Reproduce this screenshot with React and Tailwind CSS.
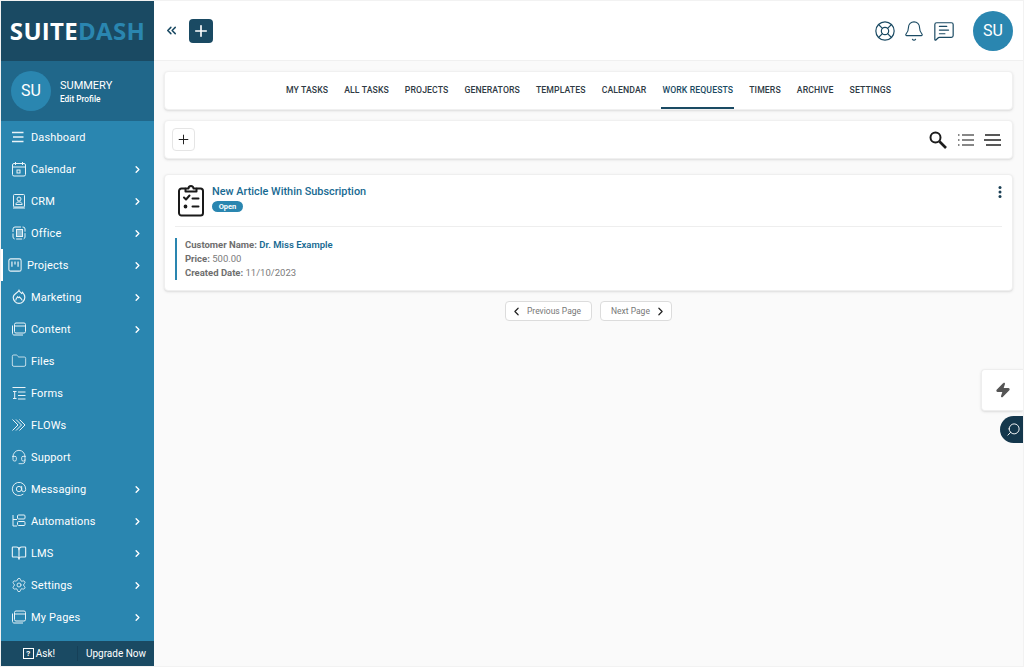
//-----------Libraries-----------//
import React from "react";

//-----------Media-----------//
import {
  AtSign,
  BookOpen,
  ChevronLeft,
  ChevronRight,
  ChevronsLeft,
  Folder,
  Headset,
  LifeBuoy,
  Bell,
  MessageSquareText,
  Plus,
  Settings,
  Zap,
  Search,
} from "lucide-react";

const Svg = ({ children, className = "h-4 w-4" }) => (
  <svg
    viewBox="0 0 16 16"
    fill="none"
    stroke="currentColor"
    strokeWidth="1"
    className={className}
  >
    {children}
  </svg>
);

const LinesIcon = () => (
  <Svg>
    <path d="M1 3.500h11.500M2 8H12.500M1 12.500h11.500" strokeWidth="1.300" />
  </Svg>
);
const CalendarIcon = () => (
  <Svg>
    <rect x="1.500" y="2.500" width="13" height="12.500" rx="1.500" />
    <path d="M1.500 6h13M4.500 1v3M11.500 1v3" />
    <rect x="6" y="9" width="3" height="3" />
  </Svg>
);
const CrmIcon = () => (
  <Svg>
    <rect x="2.500" y="1.500" width="11" height="12.500" rx="1" />
    <circle cx="8" cy="6" r="2" />
    <path d="M4.800 11.500c.3-2 1.500-2.600 3.200-2.600s2.900.6 3.200 2.600zM2 15h12" />
  </Svg>
);
const OfficeIcon = () => (
  <Svg>
    <rect x="2" y="2" width="12" height="12" rx="2" strokeDasharray="6 1.500" />
    <rect x="5.500" y="4.500" width="6" height="7" fill="currentColor" fillOpacity="0.450" />
  </Svg>
);
const ProjectsIcon = () => (
  <Svg className="h-[14px] w-[14px]">
    <rect x="1" y="1" width="14" height="14" rx="2" strokeWidth="1.200" />
    <path d="M4.500 4v6M8 4v3.500M11.500 4v6" strokeWidth="1.400" />
  </Svg>
);
const MarketingIcon = () => (
  <Svg>
    <path d="M8 1.500c.6 1.600 1.800 1.800 2.600 3 .6-.4.800-.8.900-1.200 1.300 1.300 2.300 3 2.300 5 0 3.500-2.700 6-5.800 6s-5.800-2.500-5.800-6c0-2.500 2.300-3.500 3.200-4.300C6 2.900 7.500 2.800 8 1.500z" strokeWidth="1.200" />
    <path d="M4.800 11.500c0-2.200 1.300-2.700 1.800-3.700.7.900 1 1.200 1.600.1.900 1 2.900 2 2.900 3.600" strokeWidth="1.100" />
  </Svg>
);
const WindowsIcon = () => (
  <Svg>
    <rect x="3.500" y="2" width="11" height="10" rx="1.500" />
    <path d="M3.500 5h11M1.500 4.500v8c0 .8.700 1.500 1.500 1.500h9" />
  </Svg>
);
const FormsIcon = () => (
  <Svg>
    <path d="M1.500 2.500h13M7 7h7.500M7 10.500h7.500M7 14h7.500M2 6.500h3.500M2 13.500h3.500M3.700 6.500v7" />
  </Svg>
);
const FlowsIcon = () => (
  <Svg>
    <path d="M1.500 2.500 7 8l-5.500 5.500M5 2.500 10.500 8 5 13.500M8.500 2.500 14 8l-5.500 5.500" />
  </Svg>
);
const AutomationIcon = () => (
  <Svg>
    <path d="M2 2v11h4M2 6.500h4" />
    <rect x="6.500" y="2" width="7.500" height="4" rx="1" />
    <rect x="6.500" y="8.500" width="7.500" height="4" rx="1" />
  </Svg>
);
const ClipboardIcon = () => (
  <svg
    viewBox="0 0 26 34"
    fill="none"
    stroke="#1a1a1a"
    strokeWidth="2"
    strokeLinecap="round"
    strokeLinejoin="round"
    className="h-[34px] w-[26px]"
  >
    <path d="M7 5.500H3.500A2.500 2.500 0 0 0 1 8v22a2.500 2.500 0 0 0 2.500 2.500h19A2.500 2.500 0 0 0 25 30V8a2.500 2.500 0 0 0-2.500-2.500H19" />
    <path d="M7.500 8.500V5.500h3a2.500 2.500 0 0 1 5 0h3v3z" />
    <path d="M6 14.500l2 2 3.500-4M14.500 15.500h6M14.500 23.500h6" />
    <circle cx="7.500" cy="23.500" r="0.900" fill="#1a1a1a" />
  </svg>
);

const menuItems = [
  { label: "Dashboard", icon: <LinesIcon /> },
  { label: "Calendar", icon: <CalendarIcon />, arrow: true },
  { label: "CRM", icon: <CrmIcon />, arrow: true },
  { label: "Office", icon: <OfficeIcon />, arrow: true },
  { label: "Projects", icon: <ProjectsIcon />, arrow: true, active: true },
  { label: "Marketing", icon: <MarketingIcon />, arrow: true },
  { label: "Content", icon: <WindowsIcon />, arrow: true },
  { label: "Files", icon: <Folder className="h-4 w-4" strokeWidth={1.200} /> },
  { label: "Forms", icon: <FormsIcon /> },
  { label: "FLOWs", icon: <FlowsIcon /> },
  { label: "Support", icon: <Headset className="h-4 w-4" strokeWidth={1.300} /> },
  { label: "Messaging", icon: <AtSign className="h-4 w-4" strokeWidth={1.400} />, arrow: true },
  { label: "Automations", icon: <AutomationIcon />, arrow: true },
  { label: "LMS", icon: <BookOpen className="h-4 w-4" strokeWidth={1.700} />, arrow: true },
  { label: "Settings", icon: <Settings className="h-4 w-4" strokeWidth={1.300} />, arrow: true },
  { label: "My Pages", icon: <WindowsIcon />, arrow: true },
];

const tabs = [
  "MY TASKS",
  "ALL TASKS",
  "PROJECTS",
  "GENERATORS",
  "TEMPLATES",
  "CALENDAR",
  "WORK REQUESTS",
  "TIMERS",
  "ARCHIVE",
  "SETTINGS",
];

const Sidebar = () => (
  <aside className="flex w-[153px] shrink-0 flex-col bg-[#2a86b0] text-white">
    {/* logo */}
    <div className="flex h-[60px] items-center justify-center bg-[#1a4a63]">
      <span className="text-[24px] leading-none font-bold tracking-[0.3px] [font-family:'Open_Sans',sans-serif]">
        SUITE<span className="text-[#2a86b0]">DASH</span>
      </span>
    </div>
    {/* profile */}
    <div className="flex h-[60px] items-center gap-[9px] bg-[#20678a] pl-[10px]">
      <div className="flex h-10 w-10 items-center justify-center rounded-full bg-[#2a86b0] text-base">
        SU
      </div>
      <div>
        <div className="text-[11px] leading-[15px]">SUMMERY</div>
        <div className="text-[8.300px] leading-3 font-medium">Edit Profile</div>
      </div>
    </div>
    {/* menu */}
    <nav className="flex-1">
      {menuItems.map((item) => (
        <div
          key={item.label}
          className={`flex h-8 items-center text-[11px] tracking-[0.150px] ${
            item.active ? "border-l-2 border-white pl-[4px]" : "pl-[10px]"
          }`}
        >
          <span className="mr-[4px] flex h-4 w-4 items-center justify-center opacity-90">
            {item.icon}
          </span>
          <span className="pt-[2px]">{item.label}</span>
          {item.arrow && (
            <ChevronRight className="mr-[11px] ml-auto h-[11px] w-[11px]" strokeWidth={3} />
          )}
        </div>
      ))}
    </nav>
    {/* footer */}
    <div className="flex h-[25px] items-center bg-[#1a4a63] text-[10px]">
      <div className="flex w-[77px] items-center justify-center gap-[2px] border-r border-[#164058]">
        <span className="flex h-[11px] w-[11px] items-center justify-center border border-white text-[8px] leading-none font-bold">
          ?
        </span>
        Ask!
      </div>
      <div className="flex-1 text-center">Upgrade Now</div>
    </div>
  </aside>
);

const TopBar = () => (
  <header className="flex h-[60px] shrink-0 items-center border-b border-[#f0f0f0] bg-white pr-[10px] pl-[10px]">
    <ChevronsLeft className="h-[15px] w-[15px] text-[#1a4a63]" strokeWidth={2.400} />
    <button className="ml-[10px] flex h-6 w-6 items-center justify-center rounded bg-[#1a4a63] text-white">
      <Plus className="h-[18px] w-[18px]" strokeWidth={2.200} />
    </button>
    <div className="ml-auto flex items-center text-[#1a4a63]">
      <LifeBuoy className="h-[22px] w-[22px]" strokeWidth={1.300} />
      <Bell className="ml-[7px] h-[22px] w-[22px]" strokeWidth={1.200} />
      <MessageSquareText className="ml-[8px] h-[22px] w-[22px]" strokeWidth={1.300} />
      <div className="ml-[18px] flex h-10 w-10 items-center justify-center rounded-full bg-[#2a86b0] text-base text-white">
        SU
      </div>
    </div>
  </header>
);

const TabsCard = () => (
  <div className="mt-[10px] flex h-[39px] items-stretch justify-center gap-[14px] rounded border border-[#f0f0f0] bg-white shadow-sm">
    {tabs.map((tab) => (
      <div
        key={tab}
        className={`flex items-center px-[1px] pt-[1px] text-[8.700px] font-medium tracking-[0.100px] ${
          tab === "WORK REQUESTS"
            ? "border-b-2 border-[#1a4a63] pt-[3px] text-[#1a4a63]"
            : "text-[#2f3a44]"
        }`}
      >
        {tab}
      </div>
    ))}
  </div>
);

const ToolbarCard = () => (
  <div className="mt-[10px] flex h-[39px] items-center rounded border border-[#f0f0f0] bg-white pr-[11px] pl-[7px] shadow-sm">
    <button className="flex h-[23px] w-[23px] items-center justify-center rounded border border-[#e5e5e5] text-[#222]">
      <Plus className="h-[15px] w-[15px]" strokeWidth={1.600} />
    </button>
    <div className="ml-auto flex items-center text-[#1c1c1c]">
      <svg viewBox="0 0 18 18" className="h-[18px] w-[18px]" fill="none" stroke="currentColor">
        <circle cx="6.500" cy="6.500" r="5" strokeWidth="2" />
        <path d="m10.500 10.500 6.500 6.500" strokeWidth="2.600" />
      </svg>
      <svg viewBox="0 0 16 14" className="ml-[11px] h-[14px] w-4 text-[#111]" fill="none" stroke="currentColor" strokeWidth="1.100">
        <path d="M4 2h12M4 7h12M4 12h12M0 2h1.500M0 7h1.500M0 12h1.500" />
      </svg>
      <svg viewBox="0 0 17 14" className="ml-[10px] h-[14px] w-[17px] text-[#222]" fill="none" stroke="currentColor" strokeWidth="1.600">
        <path d="M1 2h15M0 7h17M2 12h15" />
      </svg>
    </div>
  </div>
);

const RequestCard = () => (
  <div className="mt-[15px] h-[117px] rounded border border-[#efefef] bg-white pr-[10px] pl-[10px] shadow-sm">
    <div className="flex h-[52px] items-start border-b border-[#eeeeee]">
      <div className="ml-[3px] pt-[8px]">
        <ClipboardIcon />
      </div>
      <div className="ml-[8px] pt-[9px]">
        <div className="text-[10.900px] leading-[15px] font-medium text-[#186a92]">
          New Article Within Subscription
        </div>
        <div className="mt-[2px] w-[31px] rounded-full bg-[#2a86b0] text-center text-[7.500px] leading-[11px] font-bold text-white">
          Open
        </div>
      </div>
      <svg viewBox="0 0 4 12" className="mt-[11px] ml-auto h-[12px] w-[4px] fill-[#1a3f55]">
        <circle cx="2" cy="1.500" r="1.500" />
        <circle cx="2" cy="6" r="1.500" />
        <circle cx="2" cy="10.500" r="1.500" />
      </svg>
    </div>
    <div className="mt-[11px] border-l-2 border-[#2a86b0] pl-[8px] text-[9.500px] leading-[14px] text-[#7b7b7b]">
      <div>
        <span className="font-bold text-[#6e6e6e]">Customer Name:</span>{" "}
        <span className="font-semibold text-[#186a92]">Dr. Miss Example</span>
      </div>
      <div>
        <span className="font-bold text-[#6e6e6e]">Price:</span> 500.00
      </div>
      <div>
        <span className="font-bold text-[#6e6e6e]">Created Date:</span> 11/10/2023
      </div>
    </div>
  </div>
);

const Pagination = () => (
  <div className="mt-[10px] flex justify-center gap-[8px] text-[8.500px] text-[#777]">
    <button className="flex h-5 w-[87px] items-center gap-[4px] rounded border border-[#dcdcdc] bg-white pl-[4px]">
      <ChevronLeft className="h-[13px] w-[13px] text-[#222]" strokeWidth={2.200} />
      Previous Page
    </button>
    <button className="flex h-5 w-[72px] items-center gap-[4px] rounded border border-[#dcdcdc] bg-white pl-[10px]">
      Next Page
      <ChevronRight className="h-[13px] w-[13px] text-[#222]" strokeWidth={2.200} />
    </button>
  </div>
);

export default function App() {
  return (
    <div className="relative flex h-[667px] w-[1024px] overflow-hidden border border-[#f2f2f2] bg-[#fafafa] [font-family:Roboto,sans-serif]">
      <Sidebar />
      <main className="flex min-w-0 flex-1 flex-col">
        <TopBar />
        <div className="pr-[10px] pl-[10px]">
          <TabsCard />
          <ToolbarCard />
          <RequestCard />
          <Pagination />
        </div>
      </main>
      {/* floating buttons */}
      <div className="absolute top-[368px] right-0 flex h-[42px] w-[42px] items-center justify-center rounded-l border border-r-0 border-[#eeeeee] bg-white shadow-sm">
        <Zap className="h-4 w-4 fill-[#555] text-[#555]" />
      </div>
      <div className="absolute top-[415px] right-0 flex h-[27px] w-[23px] items-center justify-end rounded-l-full bg-[#14374c] pr-[2px] text-white">
        <Search className="h-[15px] w-[15px] -scale-x-100" strokeWidth={1.500} />
      </div>
    </div>
  );
}
